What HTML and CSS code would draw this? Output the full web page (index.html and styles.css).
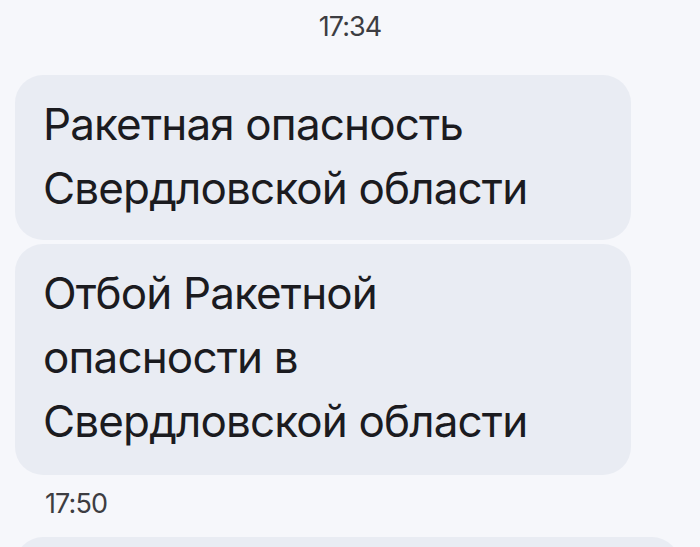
FILE: index.html
```html
<!DOCTYPE html>
<html lang="ru">
<head>
  <meta charset="UTF-8" />
  <meta name="viewport" content="width=device-width, initial-scale=1.0"/>
  <title>Сообщения</title>
  <link rel="stylesheet" href="styles.css">
</head>
<body>
  <main class="chat">
    <div class="stamp">17:34</div>

    <div class="bubble">Ракетная опасность Свердловской области</div>
    <div class="bubble bubble-tall">Отбой Ракетной опасности в Свердловской области</div>
    <div class="stamp stamp-left">17:50</div>

    <div class="bubble bubble-wide"></div>
  </main>
</body>
</html>
```

FILE: styles.css
```css
  html, body {
    overflow: hidden;
  }
  body {
    background-color: #f6f7fb;
    color: #1b1b1f;
    font-family: Inter, "Noto Sans", sans-serif;
    margin: 0;
    padding: 0;
    height: 547px;
  }
  .chat {
    display: flex;
    flex-direction: column;
    align-items: flex-start;
    padding: 0 15px;
  }
  .stamp {
    align-self: center;
    padding-top: 11px;
    margin-bottom: 33px;
    font-size: 27px;
    line-height: 31px;
    color: #3d3d42;
    letter-spacing: -0.9px;
  }
  .stamp-left {
    align-self: flex-start;
    padding: 0 0 0 30px;
    margin: 13px 0 18px 0;
  }
  .bubble {
    box-sizing: border-box;
    width: 616px;
    padding: 17px 28px 20px 28px;
    margin-bottom: 4px;
    background: #e9ecf3;
    border-radius: 28px;
    font-size: 44px;
    line-height: 64px;
    letter-spacing: -0.85px;
  }
  .bubble-tall {
    padding-bottom: 22px;
    margin-bottom: 0;
  }
  .bubble-wide {
    width: 665px;
    height: 60px;
  }
```
